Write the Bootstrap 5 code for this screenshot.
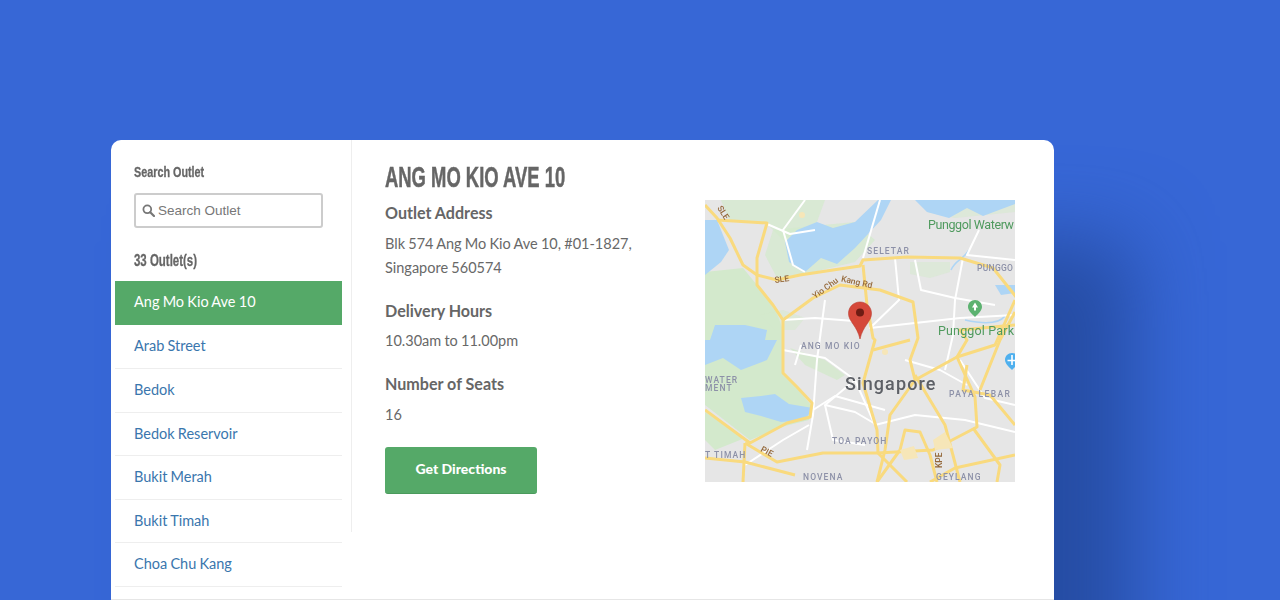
<!DOCTYPE html>
<html lang="en">
<head>
    <meta charset="UTF-8">
    <meta name="viewport" content="width=device-width, initial-scale=1.0">
    <title>Outlets</title>
    <link href="https://cdn.jsdelivr.net/npm/bootstrap@5.3.0/dist/css/bootstrap.min.css" rel="stylesheet">
    <style>
        html, body { height: 600px; overflow: hidden; }
        body { background: #3767d6; padding: 140px 0 0 111px; font-family: Lato, "Noto Sans", sans-serif; color: #686868; font-size: 14.5px; word-spacing: -.5px; }
        .outlet-panel { width: 943px; height: 460px; background: #fff; border-radius: 10px 10px 0 0; border-bottom: 1px solid #e6e6e6; box-shadow: 78px 100px 80px #264da4; overflow: hidden; }
        .outlet-side { width: 241px; padding: 0 10px 0 4px; position: relative; flex: none; }
        .outlet-side::after { content: ""; position: absolute; top: 0; right: 0; width: 1px; height: 392px; background: #eee; }
        .cond { display: block; font-family: "Liberation Sans", sans-serif; font-weight: 700; color: #666; transform-origin: left center; white-space: nowrap; word-spacing: 0; -webkit-text-stroke: .3px #666; }
        .side-label { font-size: 15px; line-height: 18px; margin: 23px 0 12px 19px; transform: scaleX(.72); }
        .side-count { font-size: 16px; line-height: 20px; margin: 23px 0 10px 19px; transform: scaleX(.716); }
        .search-wrap { margin-left: 19px; width: 189px; position: relative; }
        .search-wrap input { height: 35px; border: 2px solid #ccc; border-radius: 3px; padding: 0 0 0 22px; font: 13.5px "Liberation Sans", sans-serif; color: #777; }
        .search-wrap input::placeholder { color: #777; opacity: 1; }
        .search-wrap svg { position: absolute; left: 8px; top: 11px; }
        .outlet-list .list-group-item { height: 43.6px; padding: 0 0 0 19px; line-height: 42px; border: 0; border-bottom: 1px solid #eee; border-radius: 0; color: #3a76ad; font-size: 14.5px; }
        .outlet-list .list-group-item.active { height: 44.4px; background: #55a968; color: #fff; border-bottom: 0; }
        .outlet-main { padding: 0 39px 0 33px; }
        .outlet-info { width: 320px; flex: none; }
        .outlet-title { font-size: 30px; line-height: 34px; margin: 20px 0 7px; transform: scaleX(.614); -webkit-text-stroke: .5px #666; }
        .info-head { font-size: 16.1px; font-weight: 700; line-height: 24px; margin: 0 0 6.500px; color: #666; word-spacing: 0; }
        .info-text { line-height: 24px; margin: 0 0 19px; width: 270px; }
        .directions-btn { width: 152px; height: 47px; margin-top: 1.500px; padding-bottom: 9px; background: #55a968; border: 0; border-bottom: 1px solid #4a9a5c; border-radius: 3px; color: #fff; font-weight: 900; font-size: 14px; word-spacing: 0; }
        .map-box { width: 310px; height: 282px; margin-top: 60px; flex: none; }
        .map-box svg { display: block; filter: blur(.5px); }
        .mt-label { font-family: Roboto, sans-serif; font-size: 8.5px; fill: #8d91a8; letter-spacing: 1.1px; font-weight: 500; word-spacing: 0; }
        .mt-green { font-family: Roboto, sans-serif; font-size: 12.5px; fill: #4f9a5e; word-spacing: 0; }
        .mt-road { font-family: Roboto, sans-serif; font-size: 8.5px; fill: #94683a; font-weight: 500; word-spacing: 0; }
        .mt-city { font-family: Roboto, sans-serif; font-size: 18px; fill: #5d6066; letter-spacing: 1.1px; font-weight: 500; }
    </style>
</head>
<body>
    <div class="outlet-panel d-flex">
        <div class="outlet-side">
            <div class="cond side-label">Search Outlet</div>
            <div class="search-wrap">
                <svg width="13" height="13" viewBox="0 0 13 13" fill="none" stroke="#777" stroke-width="1.8"><circle cx="5.3" cy="5.3" r="3.9"/><path d="M8.2 8.2 12 12" stroke-linecap="round" stroke-width="2.2"/></svg>
                <input type="text" class="form-control" placeholder="Search Outlet">
            </div>
            <div class="cond side-count">33 Outlet(s)</div>
            <div class="list-group outlet-list">
                <a href="#" class="list-group-item active">Ang Mo Kio Ave 10</a>
                <a href="#" class="list-group-item">Arab Street</a>
                <a href="#" class="list-group-item">Bedok</a>
                <a href="#" class="list-group-item">Bedok Reservoir</a>
                <a href="#" class="list-group-item">Bukit Merah</a>
                <a href="#" class="list-group-item">Bukit Timah</a>
                <a href="#" class="list-group-item">Choa Chu Kang</a>
            </div>
        </div>
        <div class="outlet-main d-flex flex-grow-1">
            <div class="outlet-info">
                <h1 class="cond outlet-title">ANG MO KIO AVE 10</h1>
                <h2 class="info-head">Outlet Address</h2>
                <p class="info-text">Blk 574 Ang Mo Kio Ave 10, #01-1827, Singapore 560574</p>
                <h2 class="info-head">Delivery Hours</h2>
                <p class="info-text">10.30am to 11.00pm</p>
                <h2 class="info-head">Number of Seats</h2>
                <p class="info-text">16</p>
                <button type="button" class="btn directions-btn">Get Directions</button>
            </div>
            <div class="map-box">
                <svg width="310" height="282" viewBox="0 0 310 282">
                    <rect width="310" height="282" fill="#e6e6e6"/>
                    <!-- green areas -->
                    <g fill="#d3e9cc">
                        <path d="M0 72 38 68 52 85 70 108 78 130 78 175 92 188 106 205 104 220 80 226 45 240 0 205Z"/>
                        <path d="M62 0H120L112 22 78 40 62 24 24 20 16 0Z" opacity=".7"/>
                        <path d="M118 25 150 22 170 40 150 62 100 74 72 78 60 55 68 30Z" opacity=".7"/>
                        <path d="M205 62h40v10l-20 6-20-4Z" opacity=".5"/>
                        <path d="M222 0h88v12l-60 6-28-6Z" opacity=".5"/>
                        <path d="M85 148 120 160 140 175 132 180 100 165Z" opacity=".8"/>
                        <path d="M55 115 78 110 100 118 90 130 70 130Z" opacity=".5"/>
                        <path d="M0 212 40 238 10 250 0 240Z"/>
                    </g>
                    <!-- water -->
                    <g fill="#aed5f5">
                        <path d="M0 20 12 20 24 50 16 62 0 75Z"/>
                        <path d="M173 0 150 22 128 28 112 22 92 30 80 42 84 62 100 72 116 58 132 64 150 48 176 20 186 0Z"/>
                        <path d="M210 0 222 12 244 18 262 8 278 16 310 4V0Z"/>
                        <path d="M0 140H72L62 160 36 170 18 158 0 165Z"/>
                        <path d="M10 125 40 125 62 130 60 140H5Z"/>
                        <path d="M36 198 56 196 70 194 84 204 108 208 100 220 76 222 56 216 40 212Z"/>
                        <path d="M290 85h20v8l-14 2Z"/>
                    </g>
                    <path d="M300 116c-6 8-22 8-40 4" fill="none" stroke="#aed5f5" stroke-width="1.5"/>
                    <path d="M264 50c-6 10-14 10-18 20" fill="none" stroke="#aed5f5" stroke-width="1.5"/>
                    <!-- white roads -->
                    <g fill="none" stroke="#fff" stroke-width="2" stroke-linejoin="round">
                        <path d="M100 0 78 30 88 65 100 72"/>
                        <path d="M62 24 85 34 110 30"/>
                        <path d="M175 0 158 58"/>
                        <path d="M190 58 194 100 165 128 255 118 310 115"/>
                        <path d="M162 122 110 118 78 120"/>
                        <path d="M258 58 250 100 248 135 240 170"/>
                        <path d="M274 30 262 55 310 60"/>
                        <path d="M210 60 216 90 250 98 290 105"/>
                        <path d="M78 150 120 158 150 180 170 225 210 215 260 220 310 232"/>
                        <path d="M112 160 108 215 102 250"/>
                        <path d="M150 180 120 205 150 212 172 225"/>
                        <path d="M120 205 128 240 160 245"/>
                        <path d="M108 210 130 196 180 210"/>
                        <path d="M90 165 96 145"/>
                        <path d="M40 265 78 240 104 225"/>
                        <path d="M310 205 280 198 255 160"/>
                        <path d="M200 160 235 170 262 185"/>
                        <path d="M120 100 112 160"/>
                    </g>
                    <!-- yellow roads -->
                    <g fill="none" stroke="#f9da7e" stroke-width="3" stroke-linejoin="round">
                        <path d="M0 5 12 18 25 38 38 65 52 75 72 80 95 75 128 70 155 66 158 60 202 57 255 58 288 68 312 98"/>
                        <path d="M12 20 62 23 52 58 52 85 68 105 78 120 78 173 92 187 107 203 105 217 82 223 45 243 0 210"/>
                        <path d="M78 120 108 98 135 85 175 90 208 102 213 138 205 160 210 180 185 215 180 250 172 282"/>
                        <path d="M158 65 162 105 168 138 170 140 158 183 172 230 173 253 202 282"/>
                        <path d="M40 243 72 262 118 253 172 253 228 250 272 227 270 197 252 157 262 140 255 130 310 125"/>
                        <path d="M40 243 38 282"/>
                        <path d="M0 258 40 262 90 275"/>
                        <path d="M210 180 252 157 290 145 310 100"/>
                        <path d="M210 175 240 225 255 282"/>
                        <path d="M310 225 285 195 258 190 262 165"/>
                        <path d="M172 282 195 250 200 230 215 232 225 255 232 282"/>
                        <path d="M225 282 250 268 310 255"/>
                        <path d="M268 228 295 265 292 282"/>
                        <path d="M275 190 295 140 310 112"/>
                        <path d="M168 150 205 140"/>
                    </g>
                    <g fill="#f6e6b8"><path d="M228 240l12-8 8 16-18 2Z"/><path d="M195 250l14-4 4 12-14 2Z"/><circle cx="180" cy="152" r="3"/><circle cx="97" cy="15" r="3"/></g>
                    <!-- labels -->
                    <text class="mt-road" transform="translate(12 8) rotate(58)">SLE</text>
                    <text class="mt-road" transform="translate(70 83) rotate(-8)">SLE</text>
                    <path id="ycPath" d="M110 99 135 81 178 91" fill="none"/>
                    <text class="mt-road"><textPath href="#ycPath">Yio Chu Kang Rd</textPath></text>
                    <text class="mt-road" transform="translate(55 251) rotate(28)">PIE</text>
                    <text class="mt-road" transform="translate(237 268) rotate(-90)">KPE</text>
                    <text class="mt-green" x="223" y="29" textLength="86">Punggol Waterw</text>
                    <text class="mt-green" x="233" y="135" textLength="76">Punggol Park</text>
                    <text class="mt-label" x="162" y="54">SELETAR</text>
                    <text class="mt-label" x="272" y="71" textLength="37">PUNGGO</text>
                    <text class="mt-label" x="96" y="149">ANG MO KIO</text>
                    <text class="mt-label" x="244" y="197" textLength="62">PAYA LEBAR</text>
                    <text class="mt-label" x="0" y="183">WATER</text>
                    <text class="mt-label" x="0" y="191">MENT</text>
                    <text class="mt-label" x="127" y="244">TOA PAYOH</text>
                    <text class="mt-label" x="0" y="258">T TIMAH</text>
                    <text class="mt-label" x="98" y="280">NOVENA</text>
                    <text class="mt-label" x="231" y="280">GEYLANG</text>
                    <text class="mt-city" x="140" y="190">Singapore</text>
                    <!-- park and airport pins -->
                    <path d="M270 100c-4 0-7 3-7 7 0 3.500 4 7 7 10 3-3 7-6.500 7-10 0-4-3-7-7-7Z" fill="#5cb270"/>
                    <path d="M270 102.500l-3 5h2v3h2v-3h2Z" fill="#fff"/>
                    <path d="M307 153c-4 0-7 3-7 7 0 3.500 4 7 7 10 3-3 7-6.500 7-10 0-4-3-7-7-7Z" fill="#4fb0ee"/>
                    <path d="M307 155v10M302.500 160.500h9" stroke="#fff" stroke-width="1.6"/>
                    <!-- marker -->
                    <path d="M155 102c-6.500 0-11.500 5-11.500 11.500 0 8 8.500 12 11.500 25.500 3-13.500 11.500-17.500 11.500-25.500 0-6.500-5-11.500-11.500-11.500Z" fill="#d5483a" stroke="#b83a2e" stroke-width=".6"/>
                    <circle cx="155" cy="112.500" r="4" fill="#6e1c14"/>
                </svg>
            </div>
        </div>
    </div>
    <script src="https://cdn.jsdelivr.net/npm/bootstrap@5.3.0/dist/js/bootstrap.bundle.min.js"></script>
</body>
</html>
